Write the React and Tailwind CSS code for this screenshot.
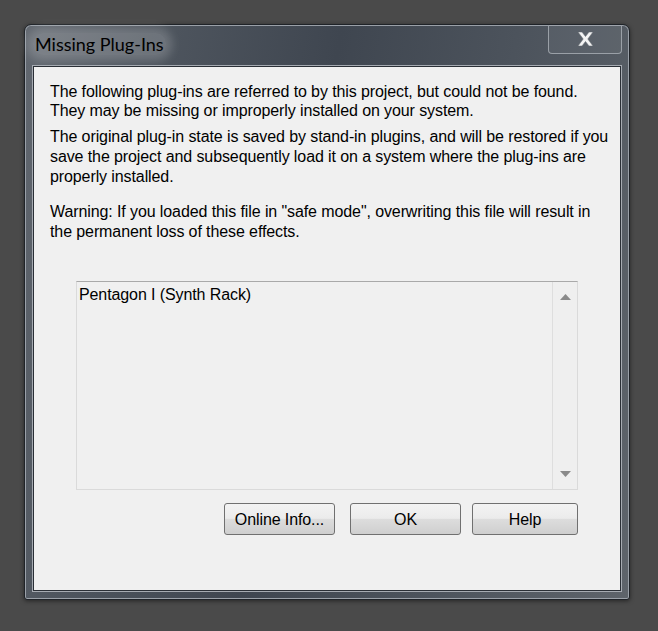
export default function App() {
  return (
    <div className="h-[631px] w-[658px] bg-[#4a4a4a] pl-[24px] pt-[24px]">
      {/* window frame */}
      <div className="flex h-[576px] w-[606px] flex-col rounded-t-[7px] rounded-b-[3px] border border-[#1f2328] bg-[linear-gradient(100deg,#626870_0%,#4f565f_18%,#3f4650_45%,#4c535c_70%,#5e646b_100%)] shadow-[0_1px_4px_rgba(0,0,0,0.5),inset_0_0_0_1px_#9aa0a8]">
        {/* title bar */}
        <div className="flex h-[41px] items-start">
          <div className="flex-1 pl-[8px] pt-[8px]">
            <span className="rounded-[10px] bg-[rgba(255,255,255,0.18)] px-[2px] font-['Lato',sans-serif] text-[18px] leading-[22px] text-black shadow-[0_0_10px_6px_rgba(255,255,255,0.18)]">
              Missing Plug-Ins
            </span>
          </div>
          <div className="mr-[7px] flex h-[29px] w-[74px] items-center justify-center rounded-b-[4px] border border-t-0 border-[#9aa0a7] bg-[rgba(255,255,255,0.05)]">
            <svg width="17" height="14" viewBox="0 0 17 14">
              <path
                d="M1 0 H5 L8.5 4.5 L12 0 H16 L10.8 7 L16 14 H12 L8.5 9.5 L5 14 H1 L6.2 7 Z"
                fill="#f4f4f4"
                stroke="#6d7278"
                strokeWidth="0.6"
              />
            </svg>
          </div>
        </div>

        {/* client area */}
        <div className="flex flex-1 px-[8px] pb-[8px] pl-[8px]">
          <div className="flex flex-1 flex-col border border-[#2a2f36] bg-[#f0f0f0] font-['Liberation_Sans',Arial,sans-serif] text-[16px] tracking-[-0.1px] text-black shadow-[0_0_0_1px_#a6abb2]">
            <div className="pl-[16px] pr-[4px] pt-[15px]">
              <p className="leading-[19px]">
                The following plug-ins are referred to by this project, but could not be found.
                <br />
                They may be missing or improperly installed on your system.
              </p>
              <p className="mt-[7px] leading-[20px]">
                The original plug-in state is saved by stand-in plugins, and will be restored if you
                <br />
                save the project and subsequently load it on a system where the plug-ins are
                <br />
                properly installed.
              </p>
              <p className="mt-[15px] leading-[20px]">
                Warning: If you loaded this file in "safe mode", overwriting this file will result in
                <br />
                the permanent loss of these effects.
              </p>
            </div>

            {/* list box */}
            <div className="ml-[42px] mt-[39px] flex h-[209px] w-[502px] border border-[#dadada] border-t-[#a9a9a9]">
              <div className="flex-1 pl-[2px] pt-[3px] leading-[20px]">Pentagon I (Synth Rack)</div>
              <div className="flex w-[25px] flex-col items-center justify-between border-l border-[#dedede] bg-[#efefef] py-[12px]">
                <svg width="11" height="6" viewBox="0 0 11 6">
                  <path d="M5.5 0 L11 6 H0 Z" fill="#8a8a8a" />
                </svg>
                <svg width="11" height="6" viewBox="0 0 11 6">
                  <path d="M0 0 H11 L5.5 6 Z" fill="#8a8a8a" />
                </svg>
              </div>
            </div>

            {/* buttons */}
            <div className="ml-[190px] mt-[13px] flex w-[354px]">
              <button className="h-[32px] w-[111px] rounded-[3px] border border-[#707070] bg-[linear-gradient(#f3f3f3_0%,#ebebeb_48%,#dddddd_50%,#cfcfcf_100%)] pt-[2px] leading-[20px]">
                Online Info...
              </button>
              <button className="ml-[15px] h-[32px] w-[111px] rounded-[3px] border border-[#707070] bg-[linear-gradient(#f3f3f3_0%,#ebebeb_48%,#dddddd_50%,#cfcfcf_100%)] pt-[2px] leading-[20px]">
                OK
              </button>
              <button className="ml-[11px] h-[32px] w-[106px] rounded-[3px] border border-[#707070] bg-[linear-gradient(#f3f3f3_0%,#ebebeb_48%,#dddddd_50%,#cfcfcf_100%)] pt-[2px] leading-[20px]">
                Help
              </button>
            </div>
          </div>
        </div>
      </div>
    </div>
  );
}
